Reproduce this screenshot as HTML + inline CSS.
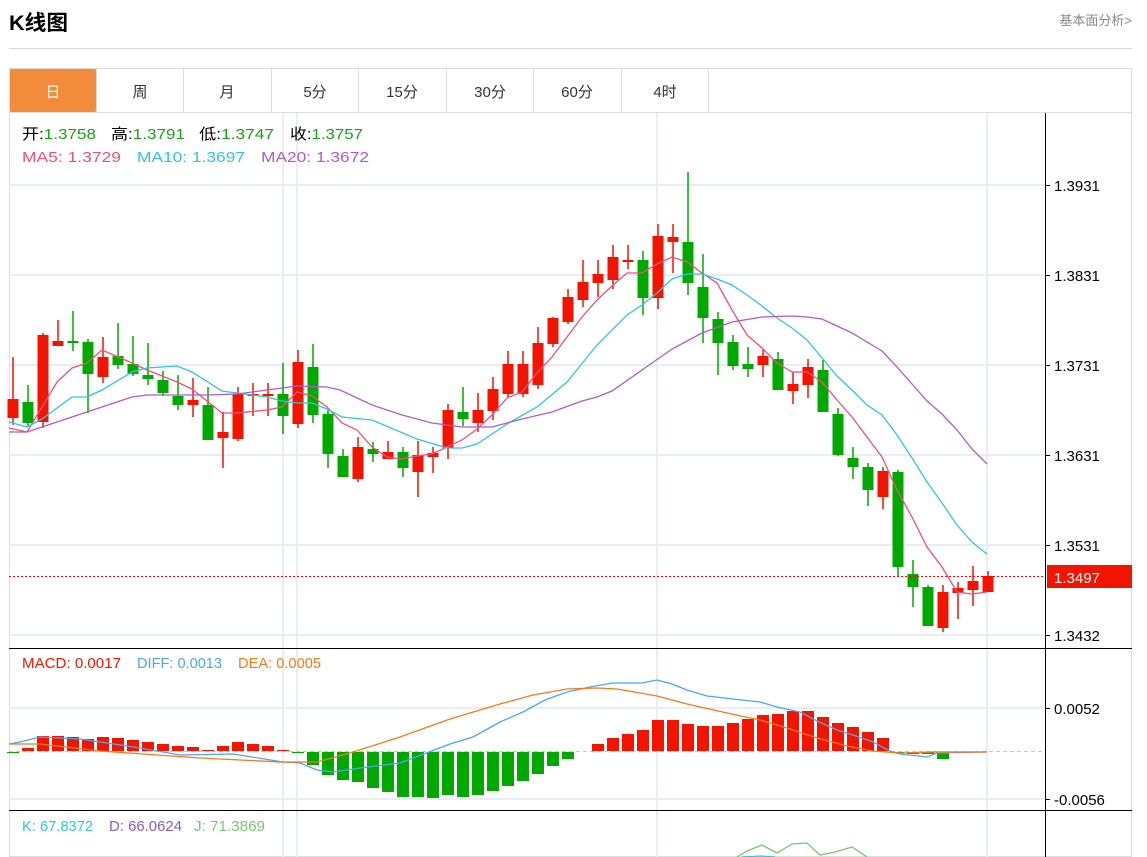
<!DOCTYPE html>
<html><head><meta charset="utf-8"><style>
body{margin:0;background:#fff;width:1147px;height:857px;overflow:hidden;font-family:"Liberation Sans","Noto Sans CJK SC",sans-serif}
svg{display:block}
text{font-family:"Liberation Sans","Noto Sans CJK SC",sans-serif}
</style></head><body>
<svg id="s" width="1147" height="857" viewBox="0 0 1147 857" xmlns="http://www.w3.org/2000/svg">
<text x="9" y="30" font-size="21" font-weight="bold" fill="#000" textLength="59" lengthAdjust="spacingAndGlyphs">K线图</text>
<text x="1132" y="25" font-size="13" fill="#888" text-anchor="end">基本面分析&gt;</text>
<line x1="9" y1="48.5" x2="1132" y2="48.5" stroke="#d6d6d6"/>
<rect x="9.5" y="68.5" width="1122" height="788" fill="none" stroke="#ddd"/>
<line x1="9" y1="112.5" x2="1132" y2="112.5" stroke="#ddd"/>
<rect x="10" y="69" width="86" height="43" fill="#f28c3c" rx="1"/>
<g stroke="#ddd"><line x1="96.5" y1="69" x2="96.5" y2="112"/><line x1="183.5" y1="69" x2="183.5" y2="112"/><line x1="271.5" y1="69" x2="271.5" y2="112"/><line x1="358.5" y1="69" x2="358.5" y2="112"/><line x1="446.5" y1="69" x2="446.5" y2="112"/><line x1="533.5" y1="69" x2="533.5" y2="112"/><line x1="621.5" y1="69" x2="621.5" y2="112"/><line x1="708.5" y1="69" x2="708.5" y2="112"/></g>
<g font-size="15" text-anchor="middle" fill="#333">
<text x="53" y="97" fill="#fff">日</text><text x="140" y="97">周</text><text x="227" y="97">月</text><text x="315" y="97">5分</text><text x="402" y="97">15分</text><text x="490" y="97">30分</text><text x="577" y="97">60分</text><text x="665" y="97">4时</text>
</g>
<g stroke="#e8eef3" stroke-width="2">
<line x1="9" y1="185" x2="1045" y2="185"/><line x1="9" y1="275" x2="1045" y2="275"/><line x1="9" y1="365" x2="1045" y2="365"/><line x1="9" y1="455" x2="1045" y2="455"/><line x1="9" y1="545" x2="1045" y2="545"/><line x1="9" y1="635" x2="1045" y2="635"/>
<line x1="9" y1="708" x2="1045" y2="708"/><line x1="9" y1="799" x2="1045" y2="799"/>
<line x1="283" y1="113" x2="283" y2="857"/><line x1="297" y1="113" x2="297" y2="857"/><line x1="657" y1="113" x2="657" y2="857"/><line x1="987" y1="113" x2="987" y2="857"/>
</g>
<g id="cd"></g>
<line x1="9" y1="576.5" x2="1045" y2="576.5" stroke="#f00" stroke-dasharray="2,2"/>
<line x1="9" y1="751.5" x2="1045" y2="751.5" stroke="#9fd3ef" stroke-dasharray="4,3"/>
<polyline fill="none" stroke="#ee4f7e" stroke-width="1.3" points="9,428 27,432 57,382 72,368 87,363 102,350 132,363 147,370 177,382 192,389 222,413 237,413 267,410 282,407 297,392 312,396 327,407 342,423 357,430 372,447 387,457 402,459 417,456 432,454 447,447 462,440 477,429 492,415 507,398 522,392 537,373 552,357 567,337 582,317 597,300 612,286 627,273 642,273 657,264 672,257 687,262 702,273 717,283 732,310 747,335 762,348 777,363 792,372 807,372 822,382 837,400 852,417 867,437 882,457 897,490 912,517 927,547 942,567 957,592 972,594 987,592"/>
<polyline fill="none" stroke="#2ec7dc" stroke-width="1.3" points="9,422 27,427 42,419 72,397 87,397 102,390 132,372 147,368 177,366 192,372 222,391 237,393 267,397 282,401 297,403 312,403 327,409 342,417 372,420 417,439 447,448 462,448 477,444 507,424 537,407 567,382 597,345 627,315 642,305 657,293 672,279 687,274 702,274 717,279 732,285 747,295 762,306 777,318 792,328 807,340 822,358 837,376 852,390 867,405 882,415 897,435 912,458 927,482 942,503 957,525 972,542 987,554"/>
<polyline fill="none" stroke="#b05cc8" stroke-width="1.3" points="9,432 27,432 42,427 72,417 102,407 132,397 147,395 177,395 207,395 237,394 267,390 297,386 327,387 340,390 372,405 402,415 432,423 462,427 492,427 522,419 552,412 582,401 597,397 612,391 642,370 672,349 702,333 732,322 762,317 792,316 807,317 822,319 852,333 882,351 897,367 912,384 927,401 942,414 957,430 972,449 987,464"/>
<polyline fill="none" stroke="#4ca6f2" stroke-width="1.3" points="9,744 20,742 40,737 80,739 140,748 180,755 233,754 283,762 300,763 317,770 333,772 360,768 400,763 450,744 473,737 500,722 523,712 545,700 567,692 590,687 612,683 642,683 657,680 672,684 687,690 707,696 733,699 760,702 777,707 800,712 817,721 837,730 853,735 873,742 890,751 900,754 927,757 937,753 987,752"/>
<polyline fill="none" stroke="#f57a1c" stroke-width="1.3" points="9,744 40,744 100,751 200,758 280,762 317,762 350,753 400,737 450,719 500,704 533,695 567,689 597,688 617,689 657,696 687,704 727,713 760,720 787,728 817,738 847,746 873,751 900,753 933,752 987,752"/>
<polyline fill="none" stroke="#7cc576" stroke-width="1.3" points="737,857 747,851 762,845 777,853 792,844 807,843 820,855 835,852 852,847 867,857"/>
<polyline fill="none" stroke="#2ec7dc" stroke-width="1.3" points="742,857 760,856 775,857"/>
<line x1="9" y1="648.5" x2="1132" y2="648.5" stroke="#000"/>
<line x1="9" y1="810.5" x2="1132" y2="810.5" stroke="#000"/>
<line x1="1045.5" y1="113" x2="1045.5" y2="857" stroke="#000"/>
<g stroke="#000"><line x1="1045" y1="185.5" x2="1050" y2="185.5"/><line x1="1045" y1="275.5" x2="1050" y2="275.5"/><line x1="1045" y1="365.5" x2="1050" y2="365.5"/><line x1="1045" y1="455.5" x2="1050" y2="455.5"/><line x1="1045" y1="545.5" x2="1050" y2="545.5"/><line x1="1045" y1="635.5" x2="1050" y2="635.5"/><line x1="1045" y1="708.5" x2="1050" y2="708.5"/><line x1="1045" y1="799.5" x2="1050" y2="799.5"/></g>
<rect x="1047" y="565" width="85" height="23" fill="#f31400"/>
<g font-size="15" fill="#000">
<text x="1054" y="191">1.3931</text><text x="1054" y="281">1.3831</text><text x="1054" y="371">1.3731</text><text x="1054" y="461">1.3631</text><text x="1054" y="551">1.3531</text><text x="1054" y="641">1.3432</text>
<text x="1054" y="583" fill="#fff">1.3497</text>
<text x="1054" y="714">0.0052</text><text x="1054" y="805">-0.0056</text>
</g>
<g font-size="15">
<text x="22" y="139" textLength="74" lengthAdjust="spacingAndGlyphs"><tspan fill="#000">开:</tspan><tspan fill="#1aa31a">1.3758</tspan></text>
<text x="111" y="139" textLength="74" lengthAdjust="spacingAndGlyphs"><tspan fill="#000">高:</tspan><tspan fill="#1aa31a">1.3791</tspan></text>
<text x="199" y="139" textLength="75" lengthAdjust="spacingAndGlyphs"><tspan fill="#000">低:</tspan><tspan fill="#1aa31a">1.3747</tspan></text>
<text x="290" y="139" textLength="73" lengthAdjust="spacingAndGlyphs"><tspan fill="#000">收:</tspan><tspan fill="#1aa31a">1.3757</tspan></text>
<text x="22" y="162" textLength="99" lengthAdjust="spacingAndGlyphs" fill="#ee4f7e">MA5: 1.3729</text>
<text x="137" y="162" textLength="108" lengthAdjust="spacingAndGlyphs" fill="#2ec7dc">MA10: 1.3697</text>
<text x="261" y="162" textLength="108" lengthAdjust="spacingAndGlyphs" fill="#b05cc8">MA20: 1.3672</text>
<text x="22" y="668" textLength="99" lengthAdjust="spacingAndGlyphs" fill="#f31400">MACD: 0.0017</text>
<text x="137" y="668" textLength="85" lengthAdjust="spacingAndGlyphs" fill="#4ca6f2">DIFF: 0.0013</text>
<text x="238" y="668" textLength="83" lengthAdjust="spacingAndGlyphs" fill="#f57a1c">DEA: 0.0005</text>
<text x="22" y="831" textLength="71" lengthAdjust="spacingAndGlyphs" fill="#2ec7dc">K: 67.8372</text>
<text x="109" y="831" textLength="73" lengthAdjust="spacingAndGlyphs" fill="#8a5cc8">D: 66.0624</text>
<text x="194" y="831" textLength="71" lengthAdjust="spacingAndGlyphs" fill="#7cc576">J: 71.3869</text>
</g>
</svg>
<script>
var C=[["r",399,418,357,425],["g",402,423,385,426],["r",335,422,333,428],["r",341,346,320,346],["g",341,343,311,351],["g",342,374,339,413],["r",357,377,337,383],["g",356,365,323,369],["g",364,374,336,376],["g",375,379,343,385],["g",380,393,371,396],["g",396,405,375,410],["r",400,405,378,417],["g",405,440,387,440],["r",432,438,412,468],["r",394,439,387,441],["r",394,395,383,416],["r",394,395,383,416],["g",394,416,363,434],["r",362,424,350,428],["g",367,415,344,423],["g",414,454,410,468],["g",456,477,449,477],["r",447,479,437,482],["g",449,454,442,462],["r",452,459,441,459],["g",452,468,447,477],["r",455,472,441,497],["r",453,457,447,473],["r",410,448,404,459],["g",412,419,387,426],["r",410,423,393,432],["r",389,411,377,420],["r",364,394,351,397],["r",364,394,351,397],["r",343,385,327,389],["r",318,344,317,347],["r",297,322,289,324],["r",282,300,260,307],["r",274,283,260,297],["r",257,280,245,289],["r",260,261,245,269],["g",260,298,251,315],["r",236,298,224,309],["r",237,242,224,273],["g",242,283,172,295],["g",287,318,254,343],["g",319,343,312,375],["g",342,366,335,370],["g",364,369,347,377],["r",356,365,350,377],["g",359,390,352,390],["r",384,391,372,404],["r",367,385,359,398],["g",370,412,360,412],["g",414,455,408,456],["g",458,467,447,479],["g",467,490,463,506],["r",471,497,467,509],["g",472,567,470,576],["g",574,587,560,607],["g",587,626,585,626],["r",592,628,585,632],["r",588,593,582,619],["r",581,590,566,606],["r",576,592,571,592]];
var M=[-1,3,15,15,14,12,14,13,11,9,7,5,4,1,5,9,7,5,1,-1,-13,-23,-28,-30,-36,-40,-45,-45,-46,-43,-45,-43,-39,-34,-29,-22,-14,-7,0,7,13,17,21,31,31,27,25,25,28,32,36,37,40,40,34,28,24,19,13,-1,-2,-2,-7,-1,0,0];
var h="";
C.forEach(function(c,i){var x=13+15*i,col=c[0]=="r"?"#f31400":"#00a800";
h+='<line x1="'+x+'" x2="'+x+'" y1="'+c[3]+'" y2="'+c[4]+'" stroke="'+col+'" stroke-width="1.5"/>';
h+='<rect x="'+(x-5.5)+'" y="'+c[1]+'" width="11" height="'+Math.max(2,c[2]-c[1])+'" fill="'+col+'"/>';});
M.forEach(function(v,i){if(!v)return;var x=13+15*i,col=v>0?"#f31400":"#00a800";var y=v>0?751-v:752;
h+='<rect x="'+(x-6)+'" y="'+y+'" width="12" height="'+Math.abs(v)+'" fill="'+col+'"/>';});
document.getElementById("cd").innerHTML=h;
</script>
</body></html>
